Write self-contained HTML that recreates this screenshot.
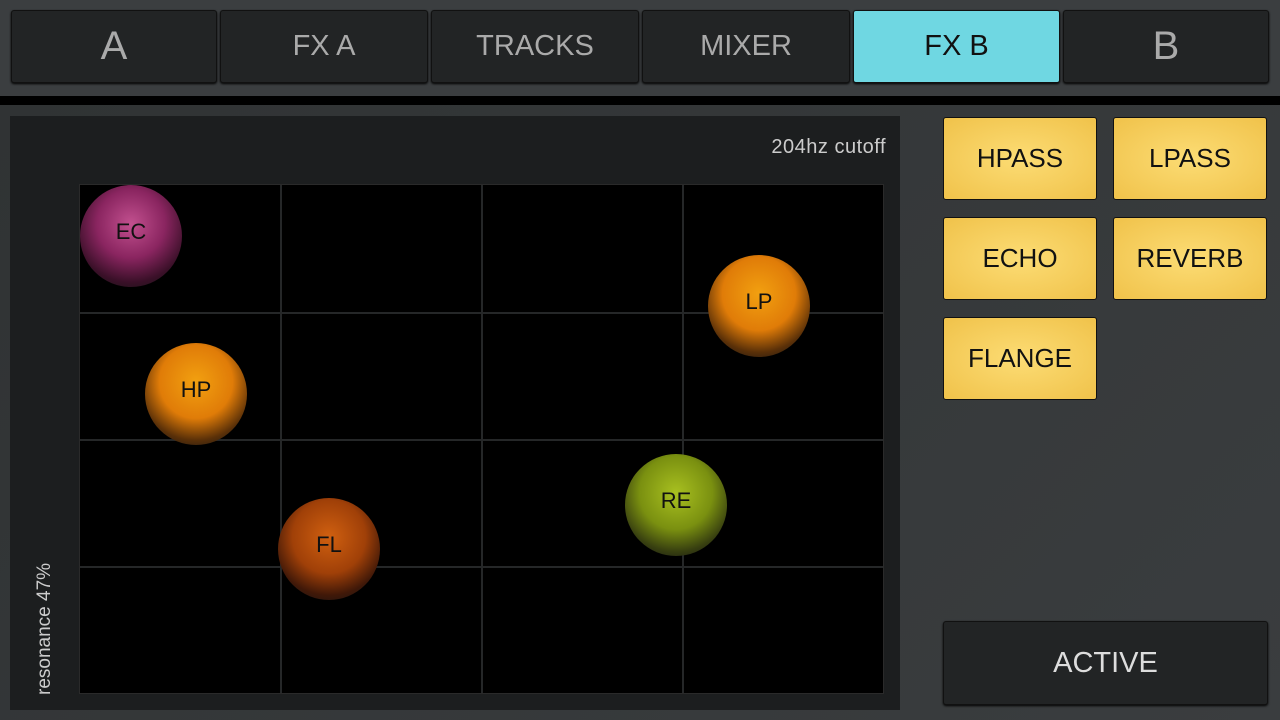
<!DOCTYPE html>
<html><head><style>
*{margin:0;padding:0;box-sizing:border-box}
body{width:1280px;height:720px;background:#000;position:relative;overflow:hidden;font-family:"Liberation Sans",sans-serif}
.top{position:absolute;left:0;top:0;width:1280px;height:96px;background:#3b3e40}
.main{position:absolute;left:0;top:105px;width:1280px;height:615px;background:linear-gradient(135deg,#303334,#3a3d3f)}
.tab{position:absolute;top:10px;height:73px;background:#222425;border:1px solid #111;border-radius:3px;box-shadow:0 1px 2px #000;color:#aaa;font-size:29px;display:flex;align-items:center;justify-content:center}
.tab.on{background:#6fd7e2;color:#111}
.pad{position:absolute;left:10px;top:116px;width:890px;height:594px;background:#1c1e1f}
.grid{position:absolute;left:79px;top:184px;width:805px;height:510px;background:#000;border:1px solid #2a2a2a}
.vl{position:absolute;top:0;width:2px;height:100%;background:#252728}
.hl{position:absolute;left:0;height:2px;width:100%;background:#252728}
.ball{position:absolute;width:102px;height:102px;border-radius:50%;display:flex;align-items:center;justify-content:center;font-size:22px;color:#111;padding-bottom:8px}
.btn{position:absolute;width:154px;height:83px;background:radial-gradient(ellipse at center,#fcdc74,#f0c24a);border:1px solid #111;border-radius:3px;display:flex;align-items:center;justify-content:center;font-size:26px;color:#111}
</style></head><body>
<div class="top"></div>
<div class="main"></div>
<div class="tab" style="left:11px;width:206px;font-size:40px">A</div>
<div class="tab" style="left:220px;width:208px">FX A</div>
<div class="tab" style="left:431px;width:208px">TRACKS</div>
<div class="tab" style="left:642px;width:208px">MIXER</div>
<div class="tab on" style="left:853px;width:207px">FX B</div>
<div class="tab" style="left:1063px;width:206px;font-size:40px">B</div>
<div class="pad"></div>
<div style="position:absolute;right:394px;top:136px;color:#ccc;font-size:20px;letter-spacing:0.5px">204hz cutoff</div>
<div style="position:absolute;left:34px;top:695px;transform-origin:0 0;transform:rotate(-90deg);color:#ccc;font-size:19px;white-space:nowrap">resonance 47%</div>
<div class="grid">
<div class="vl" style="left:200px"></div><div class="vl" style="left:401px"></div><div class="vl" style="left:602px"></div>
<div class="hl" style="top:127px"></div><div class="hl" style="top:254px"></div><div class="hl" style="top:381px"></div>
</div>
<div class="ball" style="left:80px;top:185px;background:radial-gradient(circle at 50% 38%,#c2508f 0%,#8a2560 42%,#3a1028 72%,#141414 92%)">EC</div>
<div class="ball" style="left:145px;top:343px;background:radial-gradient(circle at 50% 38%,#f2a010 0%,#e07c08 45%,#5a3008 72%,#141414 92%)">HP</div>
<div class="ball" style="left:708px;top:255px;background:radial-gradient(circle at 50% 38%,#f2a010 0%,#e07c08 45%,#5a3008 72%,#141414 92%)">LP</div>
<div class="ball" style="left:625px;top:454px;background:radial-gradient(circle at 50% 38%,#a8c020 0%,#7a9010 45%,#384010 72%,#141414 92%)">RE</div>
<div class="ball" style="left:278px;top:498px;background:radial-gradient(circle at 50% 38%,#d06010 0%,#a04008 45%,#401808 72%,#141414 92%)">FL</div>
<div class="btn" style="left:943px;top:117px">HPASS</div>
<div class="btn" style="left:1113px;top:117px">LPASS</div>
<div class="btn" style="left:943px;top:217px">ECHO</div>
<div class="btn" style="left:1113px;top:217px">REVERB</div>
<div class="btn" style="left:943px;top:317px">FLANGE</div>
<div class="tab" style="left:943px;top:621px;width:325px;height:84px;color:#ddd">ACTIVE</div>
</body></html>
